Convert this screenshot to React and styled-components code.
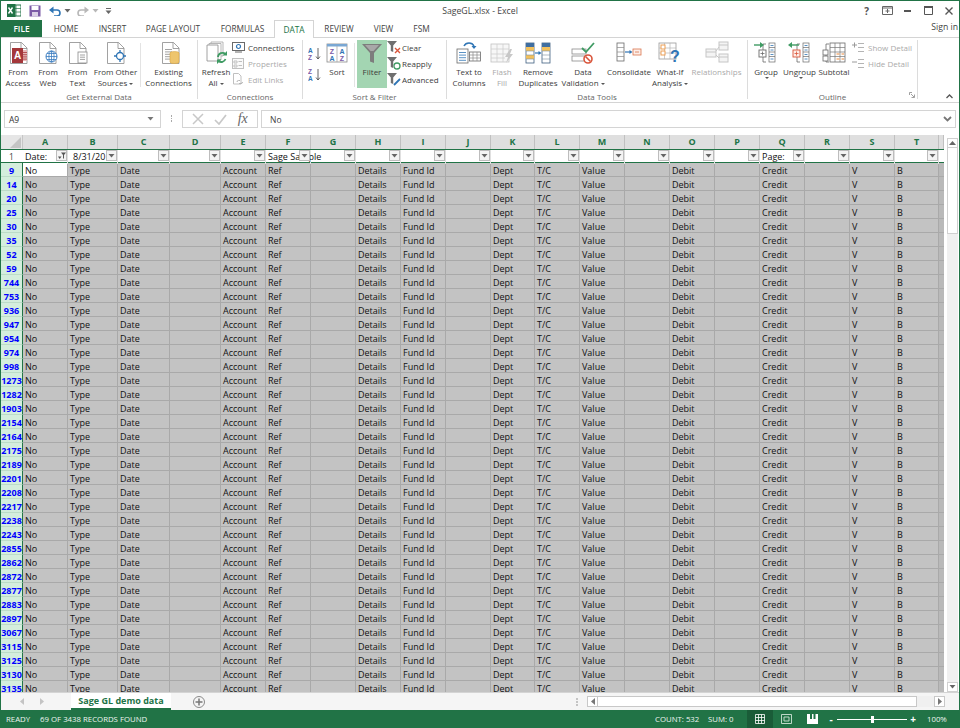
import React from "react";
import styled, { createGlobalStyle } from "styled-components";

const GREEN = "#217346";
const UI_FONT = `"Open Sans", "Noto Sans", "Liberation Sans", sans-serif`;

const GlobalStyle = createGlobalStyle`
  html, body { margin: 0; padding: 0; background: #fff; }
  body { font-family: ${UI_FONT}; color: #444; overflow: hidden; }
`;

const Window = styled.div`
  width: 960px;
  height: 728px;
  box-sizing: border-box;
  border-top: 1px solid ${GREEN};
  border-left: 1px solid ${GREEN};
  border-right: 1px solid ${GREEN};
  display: flex;
  flex-direction: column;
  overflow: hidden;
  background: #fff;
`;

const TitleBar = styled.div`
  height: 19px;
  display: grid;
  grid-template-columns: 1fr auto 1fr;
  align-items: center;
  flex: none;
`;
const QuickAccess = styled.div`
  display: flex;
  align-items: center;
  padding-left: 6px;
`;
const QuickBtn = styled.span`
  width: ${(p) => p.$w}px;
  display: flex;
  align-items: center;
`;
const Title = styled.div`
  font-size: 8.7px;
  color: #444;
`;
const WinControls = styled.div`
  display: flex;
  justify-content: flex-end;
  align-items: center;
`;
const WinBtn = styled.span`
  width: 20.5px;
  height: 16px;
  display: flex;
  align-items: center;
  justify-content: center;
  font-size: 10px;
  font-weight: 700;
  color: #555;
`;

const TabBar = styled.div`
  height: 18px;
  box-sizing: border-box;
  display: flex;
  align-items: stretch;
  flex: none;
  border-bottom: 1px solid #d4d4d4;
`;
const FileTab = styled.div`
  width: 41px;
  background: ${GREEN};
  color: #fff;
  font-size: 8.3px;
  font-weight: 600;
  display: flex;
  align-items: center;
  justify-content: center;
`;
const Tab = styled.div`
  width: ${(p) => p.$w}px;
  box-sizing: border-box;
  font-size: 8.3px;
  display: flex;
  align-items: center;
  justify-content: center;
  color: ${(p) => (p.$active ? GREEN : "#444")};
  position: relative;
  ${(p) =>
    p.$active &&
    `background:#fff; border:1px solid #d4d4d4; border-bottom:none; margin-bottom:-1px; font-weight:500;`}
`;
const SignIn = styled.div`
  margin-left: auto;
  font-size: 8.7px;
  padding-right: 1px;
  margin-top: -3px;
  color: #444;
  align-self: center;
`;

const Ribbon = styled.div`
  height: 65px;
  display: flex;
  flex: none;
  box-sizing: border-box;
  border-bottom: 1px solid #d4d4d4;
  position: relative;
`;
const Group = styled.div`
  width: ${(p) => p.$w}px;
  box-sizing: border-box;
  display: flex;
  flex-direction: column;
  border-right: 1px solid #dcdcdc;
  margin: 2px 0 3px;
  position: relative;
`;
const GroupBody = styled.div`
  height: 50px;
  flex: none;
  display: flex;
  align-items: flex-start;
  padding-left: ${(p) => p.$pl || 0}px;
`;
const GroupLabel = styled.div`
  height: 10px;
  line-height: 13px;
  text-align: center;
  font-size: 8px;
  color: #666;
`;
const BigBtn = styled.div`
  width: ${(p) => p.$w}px;
  flex: none;
  display: flex;
  flex-direction: column;
  align-items: center;
  background: ${(p) => (p.$on ? "#a3d5b2" : "transparent")};
  color: ${(p) => (p.$off ? "#aaa" : "#3c3c3c")};
  font-size: 8px;
  line-height: 11.4px;
  text-align: center;
  white-space: nowrap;
  height: 48px;
  svg { flex: none; margin-top: 1px; height: 24px; margin-bottom: 1px; }
`;
const Caret = styled.span`
  display: inline-block;
  width: 0;
  height: 0;
  margin-left: 2px;
  vertical-align: 1.5px;
  border: 2px solid transparent;
  border-top: 2.5px solid #555;
  border-bottom: none;
`;
const InnerSep = styled.div`
  width: 1px;
  flex: none;
  background: #e3e3e3;
  margin: 3px ${(p) => p.$mr || 1}px 0 ${(p) => p.$ml || 1}px;
  height: 44px;
`;
const SmallList = styled.div`
  display: flex;
  flex-direction: column;
  margin-top: -1px;
`;
const SmallBtn = styled.div`
  height: 16px;
  display: flex;
  align-items: center;
  gap: ${(p) => p.$gap ?? 3}px;
  font-size: 8px;
  white-space: nowrap;
  color: ${(p) => (p.$off ? "#aaa" : "#3c3c3c")};
  svg { flex: none; }
`;
const SortCol = styled.div`
  width: 19px;
  box-sizing: border-box;
  flex: none;
  padding: 7px 0 0 5px;
  display: flex;
  flex-direction: column;
  gap: 8px;
`;
const Launcher = styled.svg`
  position: absolute;
  right: 2px;
  bottom: 1px;
`;
const Collapse = styled.svg`
  position: absolute;
  right: 6px;
  bottom: 3px;
`;

const FormulaBar = styled.div`
  height: 23px;
  margin-top: 2px;
  display: flex;
  align-items: flex-end;
  flex: none;
  padding-left: 3px;
`;
const NameBox = styled.div`
  width: 157px;
  height: 18px;
  box-sizing: border-box;
  border: 1px solid #d4d4d4;
  display: flex;
  align-items: center;
  justify-content: space-between;
  padding: 0 6px 0 4px;
  font-size: 8.5px;
  color: #333;
`;
const Dots = styled.div`
  width: 21px;
  display: flex;
  flex-direction: column;
  align-items: center;
  gap: 1px;
  align-self: center;
  margin-top: 4px;
  i { width: 1.5px; height: 1.5px; background: #aaa; display: block; }
`;
const FxBox = styled.div`
  width: 76px;
  height: 18px;
  box-sizing: border-box;
  border: 1px solid #d4d4d4;
  display: flex;
  align-items: center;
  justify-content: space-around;
  padding: 0 4px;
  margin-right: 3px;
`;
const FxText = styled.span`
  font-family: "Liberation Serif", serif;
  font-style: italic;
  font-size: 14px;
  color: #666;
`;
const FormulaInput = styled.div`
  width: 695px;
  height: 18px;
  box-sizing: border-box;
  border: 1px solid #d4d4d4;
  display: flex;
  align-items: center;
  justify-content: space-between;
  padding: 0 3px 0 8px;
  font-size: 8.5px;
  color: #444;
`;

const SheetArea = styled.div`
  flex: 1;
  min-height: 0;
  margin-top: 7px;
  display: flex;
  overflow: hidden;
`;
const Grid = styled.div`
  flex: none;
  width: 943px;
  overflow: hidden;
  background: #fff;
`;
const COLS = "22px 45px 50px 52px 51px 45px 45px 45px 45px 45px 45px 44px 45px 45px 45px 45px 45px 45px 45px 45px 44px 5px";
const HeadRow = styled.div`
  display: grid;
  grid-template-columns: ${COLS};
  height: 14px;
  background: #e6e6e6;
`;
const Corner = styled.div`
  border-right: 1px solid #c6c6c6;
  display: flex;
  align-items: flex-end;
  justify-content: flex-end;
  padding: 0 1px 1px 0;
`;
const ColHead = styled.div`
  box-sizing: border-box;
  background: #dfdfdf;
  border-right: 1px solid #c0c0c0;
  color: ${GREEN};
  font-size: 9px;
  font-weight: 700;
  text-align: center;
  line-height: 13px;
`;
const FilterRow = styled.div`
  display: grid;
  grid-template-columns: ${COLS};
  height: 14px;
  box-sizing: border-box;
  background: #fff;
  border-top: 1px solid ${GREEN};
  border-bottom: 1px solid ${GREEN};
`;
const FilterHeadNum = styled.div`
  font-size: 8.5px;
  line-height: 14px;
  text-align: center;
  color: #444;
  margin-left: -1px;
`;
const FilterCell = styled.div`
  position: relative;
  box-sizing: border-box;
  border-right: 1px solid #e0e0e0;
  font-size: 9px;
  line-height: 14px;
  color: #111;
  padding-left: ${(p) => p.$pad || 2}px;
  white-space: nowrap;
`;
const FilterBtn = styled.span`
  position: absolute;
  right: 0;
  top: 0;
  width: 11px;
  height: 11px;
  box-sizing: border-box;
  border: 1px solid #bdbdbd;
  background: #f4f4f4;
  display: flex;
  align-items: center;
  justify-content: center;
  z-index: 2;
`;
const DataRow = styled.div`
  display: grid;
  grid-template-columns: ${COLS};
  height: 14px;
`;
const RowHead = styled.div`
  box-sizing: border-box;
  background: #d4eedd;
  border-right: 1px solid ${GREEN};
  border-bottom: 1px solid #bcdcc8;
  color: #0000ff;
  font-size: 9px;
  font-weight: 700;
  padding-top: 2px;
  line-height: 11px;
  text-align: center;
`;
const Cell = styled.div`
  box-sizing: border-box;
  background: ${(p) => (p.$active ? "#fff" : "#c3c3c3")};
  border-right: 1px solid #a9a9a9;
  border-bottom: 1px solid #a9a9a9;
  font-size: 9px;
  padding: 2px 0 0 2px;
  line-height: 11px;
  color: #111;
  white-space: nowrap;
  overflow: hidden;
`;
const Edge = styled.div`
  box-sizing: border-box;
  background: #b9b9b9;
  border-bottom: 1px solid #a9a9a9;
`;

const VScroll = styled.div`
  width: 11px;
  margin-left: 3px;
  padding-top: 3px;
  box-sizing: border-box;
  display: flex;
  flex-direction: column;
`;
const ScrollBtn = styled.div`
  height: 10px;
  flex: none;
  box-sizing: border-box;
  border: 1px solid #d0d0d0;
  display: flex;
  align-items: center;
  justify-content: center;
  background: #fff;
`;
const VThumb = styled.div`
  height: 86px;
  flex: none;
  box-sizing: border-box;
  border: 1px solid #d0d0d0;
  border-top: none;
  background: #fff;
`;
const VTrack = styled.div`
  flex: 1;
  background: #f0f0f0;
`;

const SheetBar = styled.div`
  height: 18px;
  background: #f5f5f5;
  border-top: 1px solid #d4d4d4;
  box-sizing: border-box;
  display: flex;
  align-items: center;
  flex: none;
`;
const NavArrows = styled.div`
  width: 70px;
  display: flex;
  gap: 16px;
  padding-left: 19px;
  box-sizing: border-box;
`;
const SheetTab = styled.div`
  width: 100px;
  height: 17px;
  box-sizing: border-box;
  background: #fff;
  border-bottom: 2px solid ${GREEN};
  color: ${GREEN};
  font-size: 9px;
  font-weight: 700;
  text-align: center;
  line-height: 15px;
  align-self: flex-start;
`;
const AddSheet = styled.div`
  margin-left: 22px;
  width: 12px;
  height: 12px;
  box-sizing: border-box;
  border: 1px solid #8a8a8a;
  border-radius: 50%;
  color: #666;
  display: flex;
  align-items: center;
  justify-content: center;
`;
const SplitDots = styled.div`
  margin-left: 371px;
  display: flex;
  flex-direction: column;
  gap: 1px;
  i { width: 2px; height: 2px; background: #c4c4c4; display: block; }
`;
const HScroll = styled.div`
  margin-left: 9px;
  display: flex;
  align-items: center;
  height: 11px;
  width: 358px;
`;
const HBtn = styled.div`
  width: 11px;
  height: 11px;
  box-sizing: border-box;
  border: 1px solid #c8c8c8;
  background: #fff;
  display: flex;
  align-items: center;
  justify-content: center;
  flex: none;
`;
const HThumb = styled.div`
  width: 319px;
  height: 11px;
  box-sizing: border-box;
  background: #fff;
  border: 1px solid #c8c8c8;
  border-left: none;
  flex: none;
`;
const HTrack = styled.div`
  flex: 1;
  height: 11px;
  background: #f0f0f0;
`;

const StatusBar = styled.div`
  height: 18px;
  background: ${GREEN};
  color: #eef5f0;
  font-size: 7.8px;
  display: flex;
  align-items: center;
  flex: none;
  margin: 0 -1px;
  padding-left: 6px;
`;
const StatusText = styled.span`
  margin-left: ${(p) => p.$ml || 0}px;
  width: ${(p) => (p.$w ? `${p.$w}px` : "auto")};
  flex: none;
  white-space: nowrap;
`;
const StatusRight = styled.div`
  margin-left: auto;
  width: 305px;
  display: flex;
  align-items: center;
`;
const ViewBtn = styled.span`
  width: 26px;
  height: 18px;
  display: flex;
  align-items: center;
  justify-content: center;
  flex: none;
  background: ${(p) => (p.$on ? "#1a5c38" : "transparent")};
`;
const ZoomSlider = styled.div`
  width: 70px;
  height: 1px;
  background: #fff;
  flex: none;
  position: relative;
`;
const ZoomThumb = styled.span`
  position: absolute;
  left: 34px;
  top: -3px;
  width: 3px;
  height: 7px;
  background: #fff;
`;
const ZoomSign = styled.span`
  width: 12px;
  flex: none;
  text-align: center;
  font-size: 10px;
  font-weight: 700;
  color: #fff;
`;

/* icon bits */
const Doc = ({ x = 0, y = 0, w = 17, h = 22 }) => (
  <path
    d={`M${x + 0.5} ${y + 0.5}h${w - 6}l5.5 5.5v${h - 6.5}h-${w - 0.5}z M${x + w - 6} ${y + 0.5}v6h6`}
    fill="#fff"
    stroke="#8a8a8a"
    strokeWidth="0.8"
  />
);

const Lines = ({ x, y, n = 3, w = 6, c = "#8a8a8a", g = 2 }) => (
  <>
    {Array.from({ length: n }).map((_, i) => (
      <path key={i} d={`M${x} ${y + i * g + 0.5}h${w}`} stroke={c} strokeWidth="0.8" />
    ))}
  </>
);

const Icon = ({ w = 24, h = 24, children }) => (
  <svg width={w} height={h} viewBox={`0 0 ${w} ${h}`}>
    {children}
  </svg>
);

const AccessIcon = () => (
  <Icon>
    <Doc x={4} y={1} />
    <rect x="12" y="9" width="9" height="11" fill="#e8b7b7" />
    <Lines x={15} y={11} n={4} w={6} c="#a4373a" g={2.2} />
    <rect x="6" y="7" width="11" height="15" fill="#a4373a" />
    <text x="11.5" y="18" fontSize="10" fontWeight="700" fill="#fff" textAnchor="middle" fontFamily="Liberation Sans">A</text>
  </Icon>
);
const WebIcon = () => (
  <Icon>
    <Doc x={3} y={1} />
    <circle cx="15.5" cy="15.5" r="5.5" fill="#fff" stroke="#3a7cc0" />
    <path d="M10 15.5h11M15.5 10v11M11 12.5h9M11 18.5h9" stroke="#3a7cc0" strokeWidth="0.8" />
    <ellipse cx="15.5" cy="15.5" rx="2.6" ry="5.5" fill="none" stroke="#3a7cc0" strokeWidth="0.8" />
  </Icon>
);
const TextIcon = () => (
  <Icon>
    <Doc x={3} y={1} />
    <rect x="12" y="11" width="9" height="11" fill="#fff" stroke="#8a8a8a" strokeWidth="0.8" />
    <Lines x={14} y={13.5} n={3} w={5} g={2.2} />
  </Icon>
);
const OtherIcon = () => (
  <Icon>
    <Doc x={3} y={1} />
    <circle cx="16" cy="15" r="3.5" fill="#fff" stroke="#2f75b5" strokeWidth="1.3" />
    <path d="M16 9v3M16 18v3M10 15h3M19 15h3" stroke="#2f75b5" strokeWidth="1.3" />
  </Icon>
);
const ExistingIcon = () => (
  <Icon>
    <Doc x={5} y={1} />
    <Lines x={8} y={8} n={5} w={7} g={2.4} />
    <path d="M13 12a4.5 1.5 0 0 1 9 0v9a4.5 1.5 0 0 1-9 0z" fill="#eec56e" stroke="#d9a441" strokeWidth="0.6" />
  </Icon>
);
const RefreshIcon = () => (
  <Icon>
    <path d="M7 1h12v14H7z" fill="#fff" stroke="#a4a4a4" strokeWidth="0.8" />
    <path d="M5 2.5h12v16H5z" fill="#fff" stroke="#a4a4a4" strokeWidth="0.8" />
    <path d="M3 4h11v16H3z" fill="#fff" stroke="#8a8a8a" strokeWidth="0.8" />
    <path d="M14 16a4.5 4.5 0 0 1 7.5-3M21.5 18a4.5 4.5 0 0 1-7 2" fill="none" stroke="#3f9b63" strokeWidth="1.8" />
    <path d="M23 10v4.5h-4.5zM13 23v-4.5h4.5z" fill="#3f9b63" />
  </Icon>
);
const SortAZIcon = ({ flip }) => (
  <svg width="14" height="13" viewBox="0 0 14 13">
    <text x="0" y="6" fontSize="6.5" fontWeight="700" fontFamily="Liberation Sans" fill={flip ? "#7b5aa6" : "#2f75b5"}>{flip ? "Z" : "A"}</text>
    <text x="0" y="12.5" fontSize="6.5" fontWeight="700" fontFamily="Liberation Sans" fill={flip ? "#2f75b5" : "#7b5aa6"}>{flip ? "A" : "Z"}</text>
    <path d="M10 1v11M8 9.5l2 2.5 2-2.5" fill="none" stroke="#555" strokeWidth="0.9" />
  </svg>
);
const SortIcon = () => (
  <Icon>
    <rect x="2" y="3" width="20" height="18" fill="#fff" stroke="#8a8a8a" strokeWidth="0.8" />
    <rect x="2" y="3" width="20" height="2.5" fill="#7aa7d3" />
    <path d="M12 5v16" stroke="#aaa" strokeWidth="0.8" />
    <text x="7" y="13" fontSize="7" fontWeight="600" textAnchor="middle" fontFamily="Liberation Sans" fill="#7b5aa6">Z</text>
    <text x="7" y="20" fontSize="7" fontWeight="600" textAnchor="middle" fontFamily="Liberation Sans" fill="#2f75b5">A</text>
    <text x="17" y="13" fontSize="7" fontWeight="600" textAnchor="middle" fontFamily="Liberation Sans" fill="#2f75b5">A</text>
    <text x="17" y="20" fontSize="7" fontWeight="600" textAnchor="middle" fontFamily="Liberation Sans" fill="#7b5aa6">Z</text>
  </Icon>
);
const FunnelIcon = () => (
  <Icon>
    <path d="M2 3h20l-8 9v10l-4-1.5V12z" fill="#7d7d7d" />
    <path d="M5 4h14l-5.5 6h-3z" fill="#a8a8a8" />
  </Icon>
);
const SmallFunnel = ({ children }) => (
  <svg width="14" height="14" viewBox="0 0 14 14">
    <path d="M0 1h10L6.2 5.5V12L3.8 11V5.5z" fill="#6f6f6f" />
    {children}
  </svg>
);
const TextColsIcon = () => (
  <Icon w={26}>
    <rect x="1" y="8" width="11" height="14" fill="#fff" stroke="#6a6a6a" strokeWidth="0.8" />
    <Lines x={3} y={11} n={4} w={7} c="#2f75b5" g={2.6} />
    <rect x="13.5" y="11" width="11" height="9" fill="#fff" stroke="#6a6a6a" strokeWidth="0.8" />
    <path d="M13.5 14h11M13.5 17h11M17 11v9M21 11v9" stroke="#8a8a8a" strokeWidth="0.7" />
    <path d="M8 5c2-4 8-4 10 0" fill="none" stroke="#2f75b5" strokeWidth="1.5" />
    <path d="M15.5 5h5l-2.5 3z" fill="#2f75b5" />
  </Icon>
);
const FlashIcon = () => (
  <Icon>
    <rect x="1" y="3" width="18" height="18" fill="#f7f7f7" stroke="#c2c2c2" strokeWidth="0.8" />
    <path d="M1 8h18M1 13h18M1 17h14M7 3v18M13 3v18" stroke="#cfcfcf" strokeWidth="0.8" />
    <path d="M20 8l-5 8h3l-2 6 7-9h-3l2-5z" fill="#c8c8c8" />
  </Icon>
);
const Stack = ({ x, hi }) => (
  <>
    <rect x={x} y="2" width="8" height="20" fill="#fff" stroke="#3f5f80" strokeWidth="0.8" />
    <rect x={x} y="2" width="8" height="4" fill="#3f6ea0" />
    {hi.map((y) => (
      <rect key={y} x={x} y={y} width="8" height="4" fill="#f2c05c" />
    ))}
    <path d={`M${x} 10h8M${x} 14h8M${x} 18h8`} stroke="#7a8ea0" strokeWidth="0.6" />
  </>
);
const RemoveIcon = () => (
  <Icon w={26}>
    <Stack x={1} hi={[6, 14]} />
    <Stack x={17} hi={[6]} />
    <path d="M10 12h5" stroke="#2f75b5" strokeWidth="1.2" />
    <path d="M13.5 10l3 2-3 2z" fill="#2f75b5" />
  </Icon>
);
const ValidationIcon = () => (
  <Icon w={26}>
    <rect x="2" y="8" width="14" height="5" fill="#fff" stroke="#8a8a8a" strokeWidth="0.8" />
    <rect x="2" y="15" width="14" height="5" fill="#fff" stroke="#8a8a8a" strokeWidth="0.8" />
    <path d="M12 7l4 4 8-9" fill="none" stroke="#3f9b63" strokeWidth="1.8" />
    <circle cx="18" cy="18" r="4" fill="#fff" stroke="#d9553b" strokeWidth="1.6" />
    <path d="M15.5 15.5l5 5" stroke="#d9553b" strokeWidth="1.6" />
  </Icon>
);
const ConsolidateIcon = () => (
  <Icon w={26}>
    <rect x="1" y="2" width="7" height="18" fill="#fff" stroke="#6a6a6a" strokeWidth="0.8" />
    <path d="M1 6.5h7M1 11h7M1 15.5h7" stroke="#8a8a8a" strokeWidth="0.7" />
    <path d="M9 11h6" stroke="#2f75b5" strokeWidth="1.2" />
    <path d="M13.5 9l3 2-3 2z" fill="#2f75b5" />
    <rect x="17" y="8" width="8" height="6" fill="#fdeee8" stroke="#d9754f" strokeWidth="0.8" />
    <path d="M19 11h4" stroke="#d9754f" strokeWidth="0.8" />
  </Icon>
);
const WhatIfIcon = () => (
  <Icon>
    <rect x="1" y="2" width="17" height="16" fill="#fff" stroke="#9a9a9a" strokeWidth="0.8" />
    <path d="M1 7h17M1 12h17M6.5 2v16M12 2v16" stroke="#b4b4b4" strokeWidth="0.7" />
    <rect x="3" y="4" width="4" height="4" fill="#fff" stroke="#ed9f55" />
    <rect x="3" y="10" width="4" height="4" fill="#fff" stroke="#ed9f55" />
    <text x="17" y="21" fontSize="16" fontWeight="700" textAnchor="middle" fontFamily="Liberation Sans" fill="#2f75b5">?</text>
  </Icon>
);
const RelIcon = () => (
  <Icon>
    <rect x="1" y="8" width="10" height="8" fill="#f4f4f4" stroke="#c6c6c6" />
    <rect x="14" y="1" width="9" height="8" fill="#f4f4f4" stroke="#c6c6c6" />
    <rect x="14" y="13" width="9" height="8" fill="#f4f4f4" stroke="#c6c6c6" />
    <path d="M11 10l3-4M11 14l3 3M1 11h10M14 4h9M14 16h9" stroke="#c6c6c6" />
  </Icon>
);
const OutlineCols = ({ x = 15 }) => (
  <>
    <rect x={x} y="2" width="6" height="19" fill="#fff" stroke="#6a6a6a" strokeWidth="0.7" />
    <path d={`M${x} 6.5h6M${x} 11h6M${x} 15.5h6`} stroke="#6a6a6a" strokeWidth="0.7" />
    <Lines x={x + 1.5} y={4} n={4} w={3} c="#2f75b5" g={4.5} />
  </>
);
const GroupIcon = ({ left, red }) => (
  <Icon>
    <path d="M9 3h3M9 21h3M9 3v18" fill="none" stroke="#6a6a6a" strokeWidth="0.8" />
    <rect x="5" y="9" width="7" height="7" fill={red ? "#fdeee8" : "#fff"} stroke={red ? "#d9553b" : "#6a6a6a"} strokeWidth="0.9" />
    <path d="M6.5 12.5h4M8.5 10.5v4" stroke={red ? "#d9553b" : "#6a6a6a"} strokeWidth="0.8" />
    {left ? (
      <>
        <path d="M3 4h8" stroke="#3f9b63" strokeWidth="1.4" />
        <path d="M4 1l-4 3 4 3z" fill="#3f9b63" />
      </>
    ) : (
      <>
        <path d="M0 4h7" stroke="#3f9b63" strokeWidth="1.4" />
        <path d="M6 1l4 3-4 3z" fill="#3f9b63" />
      </>
    )}
    <OutlineCols />
  </Icon>
);
const SubtotalIcon = () => (
  <Icon>
    <path d="M4 3h3M4 21h3M4 3v18" fill="none" stroke="#6a6a6a" strokeWidth="0.8" />
    <rect x="1" y="9" width="5" height="5" fill="#fff" stroke="#6a6a6a" strokeWidth="0.8" />
    <rect x="1" y="15" width="5" height="5" fill="#fff" stroke="#6a6a6a" strokeWidth="0.8" />
    <rect x="8" y="2" width="15" height="19" fill="#fff" stroke="#6a6a6a" strokeWidth="0.8" />
    <path d="M8 6.5h15M8 11h15M8 15.5h15M13 2v19M18 2v19" stroke="#777" strokeWidth="0.7" />
    <path d="M14.5 13h3M19.5 13h2.5M14.5 18h3M19.5 18h2.5" stroke="#ed8b3c" strokeWidth="1" />
  </Icon>
);
const DetailIcon = ({ plus }) => (
  <svg width="13" height="11" viewBox="0 0 13 11">
    <path d={plus ? "M0 3h5M2.5 .5v5" : "M0 4h5"} stroke="#9a9a9a" />
    <path d="M6 1.5h6M6 5.5h6M6 9.5h6" stroke="#b4b4b4" />
  </svg>
);
const ConnIcon = () => (
  <svg width="13" height="11" viewBox="0 0 13 11">
    <rect x="0.5" y="0.5" width="12" height="8" fill="#fff" stroke="#6a6a6a" />
    <circle cx="6.5" cy="4.5" r="2" fill="none" stroke="#2f75b5" strokeWidth="1.2" />
    <path d="M3 10h7" stroke="#6a6a6a" />
  </svg>
);
const PropsIcon = () => (
  <svg width="13" height="11" viewBox="0 0 13 11">
    <rect x="0.5" y="0.5" width="11" height="10" fill="#fafafa" stroke="#c0c0c0" />
    <path d="M2 3h3v2H2zM2 7h3v2H2zM6.5 3.5h3.5M6.5 7.5h3.5" fill="none" stroke="#c0c0c0" />
  </svg>
);
const LinksIcon = () => (
  <svg width="13" height="12" viewBox="0 0 13 12">
    <path d="M1.5 .5h5l2.5 2.5v8h-7.5z" fill="#fff" stroke="#c0c0c0" />
    <path d="M5 9a1.5 1.5 0 0 1 1.5-1.5H8M7 10.5h2a1.5 1.5 0 0 0 1.5-1.5" fill="none" stroke="#b4b4b4" />
  </svg>
);
const TinyTri = ({ c = "#555" }) => (
  <svg width="7" height="4" viewBox="0 0 7 4">
    <path d="M0.5 0h6L3.5 3.5z" fill={c} />
  </svg>
);
const SideTri = ({ dir = "left", c = "#777" }) => (
  <svg width="4" height="7" viewBox="0 0 4 7">
    <path d={dir === "left" ? "M4 0v7L0 3.5z" : "M0 0v7l4-3.5z"} fill={c} />
  </svg>
);

const colLetters = "ABCDEFGHIJKLMNOPQRST".split("");
const rowNums = [9, 14, 20, 25, 30, 35, 52, 59, 744, 753, 936, 947, 954, 974, 998, 1273, 1282, 1903, 2154, 2164, 2175, 2189, 2201, 2208, 2217, 2238, 2243, 2855, 2862, 2872, 2877, 2883, 2897, 3067, 3115, 3125, 3130, 3135];
const rowData = ["No", "Type", "Date", "", "Account", "Ref", "", "Details", "Fund Id", "", "Dept", "T/C", "Value", "", "Debit", "", "Credit", "", "V", "B"];
const filterData = { A: "Date:", B: "8/31/20", F: "Sage Sample", Q: "Page:" };

export default function App() {
  return (
    <Window>
      <GlobalStyle />
      <TitleBar>
        <QuickAccess>
          <QuickBtn $w={22}>
            <svg width="14" height="13" viewBox="0 0 14 13">
              <rect x="5" y="1" width="9" height="11" fill="#fff" stroke="#217346" />
              <path d="M9 1v11M5 4.5h9M5 8h9" stroke="#217346" strokeWidth="0.7" />
              <rect x="0" y="0" width="8.5" height="13" fill="#217346" />
              <path d="M1.5 3.5l4 6M5.5 3.5l-4 6" stroke="#fff" strokeWidth="1.4" />
            </svg>
          </QuickBtn>
          <QuickBtn $w={20}>
            <svg width="12" height="12" viewBox="0 0 12 12">
              <rect x="0.5" y="0.5" width="11" height="11" fill="#7b5aa6" />
              <rect x="2.5" y="1" width="7" height="4" fill="#fff" />
              <rect x="3" y="7" width="6" height="4.5" fill="#d9cfe6" />
            </svg>
          </QuickBtn>
          <QuickBtn $w={15}>
            <svg width="12" height="10" viewBox="0 0 12 10">
              <path d="M2 4h6a3 3 0 0 1 0 6H5" fill="none" stroke="#2f75b5" strokeWidth="1.6" />
              <path d="M4.5 .5v7L0 4z" fill="#2f75b5" />
            </svg>
          </QuickBtn>
          <QuickBtn $w={13}>
            <TinyTri c="#666" />
          </QuickBtn>
          <QuickBtn $w={15}>
            <svg width="12" height="10" viewBox="0 0 12 10">
              <path d="M10 4H4a3 3 0 0 0 0 6h3" fill="none" stroke="#b8b8b8" strokeWidth="1.6" />
              <path d="M7.5 .5v7L12 4z" fill="#b8b8b8" />
            </svg>
          </QuickBtn>
          <QuickBtn $w={13}>
            <TinyTri c="#b8b8b8" />
          </QuickBtn>
          <QuickBtn $w={10}>
            <svg width="7" height="6" viewBox="0 0 7 6">
              <path d="M1 .5h5" stroke="#666" />
              <path d="M0.5 2.5h6L3.5 6z" fill="#666" />
            </svg>
          </QuickBtn>
        </QuickAccess>
        <Title>SageGL.xlsx - Excel</Title>
        <WinControls>
          <WinBtn>?</WinBtn>
          <WinBtn>
            <svg width="11" height="9" viewBox="0 0 11 9">
              <path d="M.5.5h10v8H.5z" fill="none" stroke="#666" />
              <path d="M.5 2h10" stroke="#666" />
              <path d="M5.5 3v4M3.5 5h4" stroke="#666" />
            </svg>
          </WinBtn>
          <WinBtn>
            <svg width="7" height="2" viewBox="0 0 7 2">
              <path d="M0 1h7" stroke="#555" strokeWidth="2" />
            </svg>
          </WinBtn>
          <WinBtn>
            <svg width="9" height="9" viewBox="0 0 9 9">
              <path d="M.5 1h8v7.5h-8z" fill="none" stroke="#555" />
              <path d="M0 1h9" stroke="#555" strokeWidth="2" />
            </svg>
          </WinBtn>
          <WinBtn>
            <svg width="8" height="8" viewBox="0 0 8 8">
              <path d="M.5.5l7 7M7.5.5l-7 7" stroke="#555" strokeWidth="1.4" />
            </svg>
          </WinBtn>
        </WinControls>
      </TitleBar>

      <TabBar>
        <FileTab>FILE</FileTab>
        <Tab $w={48}>HOME</Tab>
        <Tab $w={45}>INSERT</Tab>
        <Tab $w={76}>PAGE LAYOUT</Tab>
        <Tab $w={63}>FORMULAS</Tab>
        <Tab $w={40} $active>DATA</Tab>
        <Tab $w={50}>REVIEW</Tab>
        <Tab $w={39}>VIEW</Tab>
        <Tab $w={37}>FSM</Tab>
        <SignIn>Sign in</SignIn>
      </TabBar>

      <Ribbon>
        <Group $w={197}>
          <GroupBody $pl={2}>
            <BigBtn $w={30}><AccessIcon />From<br />Access</BigBtn>
            <BigBtn $w={30}><WebIcon />From<br />Web</BigBtn>
            <BigBtn $w={29}><TextIcon />From<br />Text</BigBtn>
            <BigBtn $w={47}><OtherIcon />From Other<br /><span>Sources<Caret /></span></BigBtn>
            <InnerSep />
            <BigBtn $w={53}><ExistingIcon />Existing<br />Connections</BigBtn>
          </GroupBody>
          <GroupLabel>Get External Data</GroupLabel>
        </Group>
        <Group $w={105}>
          <GroupBody $pl={2}>
            <BigBtn $w={32}><RefreshIcon />Refresh<br /><span>All<Caret /></span></BigBtn>
            <SmallList>
              <SmallBtn><ConnIcon />Connections</SmallBtn>
              <SmallBtn $off><PropsIcon />Properties</SmallBtn>
              <SmallBtn $off><LinksIcon />Edit Links</SmallBtn>
            </SmallList>
          </GroupBody>
          <GroupLabel>Connections</GroupLabel>
        </Group>
        <Group $w={144}>
          <GroupBody>
            <SortCol>
              <SortAZIcon />
              <SortAZIcon flip />
            </SortCol>
            <BigBtn $w={30}><SortIcon />Sort</BigBtn>
            <InnerSep $ml={2} $mr={2} />
            <BigBtn $w={30} $on><FunnelIcon />Filter</BigBtn>
            <SmallList>
              <SmallBtn $gap={1}>
                <SmallFunnel><path d="M8 8l5 5M13 8l-5 5" stroke="#d9553b" strokeWidth="1.4" /></SmallFunnel>Clear
              </SmallBtn>
              <SmallBtn $gap={1}>
                <SmallFunnel><circle cx="10" cy="10" r="3" fill="none" stroke="#3f9b63" strokeWidth="1.3" /></SmallFunnel>Reapply
              </SmallBtn>
              <SmallBtn $gap={1}>
                <SmallFunnel><path d="M7 13l6-6" stroke="#2f75b5" strokeWidth="1.8" /></SmallFunnel>Advanced
              </SmallBtn>
            </SmallList>
          </GroupBody>
          <GroupLabel>Sort &amp; Filter</GroupLabel>
        </Group>
        <Group $w={301}>
          <GroupBody $pl={1}>
            <BigBtn $w={42}><TextColsIcon />Text to<br />Columns</BigBtn>
            <BigBtn $w={24} $off><FlashIcon />Flash<br />Fill</BigBtn>
            <BigBtn $w={48}><RemoveIcon />Remove<br />Duplicates</BigBtn>
            <BigBtn $w={42}><ValidationIcon />Data<br /><span>Validation<Caret /></span></BigBtn>
            <BigBtn $w={50}><ConsolidateIcon />Consolidate</BigBtn>
            <BigBtn $w={32}><WhatIfIcon />What-If<br /><span>Analysis<Caret /></span></BigBtn>
            <BigBtn $w={61} $off><RelIcon />Relationships</BigBtn>
          </GroupBody>
          <GroupLabel>Data Tools</GroupLabel>
        </Group>
        <Group $w={170}>
          <GroupBody $pl={1}>
            <BigBtn $w={34}><GroupIcon />Group<br /><Caret /></BigBtn>
            <BigBtn $w={33}><GroupIcon left red />Ungroup<br /><Caret /></BigBtn>
            <BigBtn $w={36}><SubtotalIcon />Subtotal</BigBtn>
            <SmallList>
              <SmallBtn $off><DetailIcon plus />Show Detail</SmallBtn>
              <SmallBtn $off><DetailIcon />Hide Detail</SmallBtn>
            </SmallList>
          </GroupBody>
          <GroupLabel>Outline</GroupLabel>
          <Launcher width="6" height="6" viewBox="0 0 6 6">
            <path d="M.5 3V.5H3M2 2l3 3M5.5 2.5v3H2.5" fill="none" stroke="#888" strokeWidth="0.8" />
          </Launcher>
        </Group>
        <Collapse width="7" height="5" viewBox="0 0 7 5">
          <path d="M.5 4l3-3 3 3" fill="none" stroke="#555" strokeWidth="1.3" />
        </Collapse>
      </Ribbon>

      <FormulaBar>
        <NameBox>
          A9
          <TinyTri c="#777" />
        </NameBox>
        <Dots><i /><i /><i /></Dots>
        <FxBox>
          <svg width="12" height="12" viewBox="0 0 12 12">
            <path d="M1 1l10 10M11 1L1 11" stroke="#c8c8c8" strokeWidth="1.5" />
          </svg>
          <svg width="13" height="11" viewBox="0 0 13 11">
            <path d="M1 6l4 4 7-9" fill="none" stroke="#c8c8c8" strokeWidth="1.7" />
          </svg>
          <FxText>fx</FxText>
        </FxBox>
        <FormulaInput>
          No
          <svg width="9" height="6" viewBox="0 0 9 6">
            <path d="M1 1l3.5 3.5L8 1" fill="none" stroke="#777" strokeWidth="1.8" />
          </svg>
        </FormulaInput>
      </FormulaBar>

      <SheetArea>
        <Grid>
          <HeadRow>
            <Corner>
              <svg width="11" height="11" viewBox="0 0 11 11">
                <path d="M11 0v11H0z" fill="#c4c4c4" />
              </svg>
            </Corner>
            {colLetters.map((c) => (
              <ColHead key={c}>{c}</ColHead>
            ))}
            <ColHead />
          </HeadRow>
          <FilterRow>
            <FilterHeadNum>1</FilterHeadNum>
            {colLetters.map((c) => (
              <FilterCell key={c} $pad={c === "B" ? 5 : 2}>
                {filterData[c]}
                <FilterBtn>
                  {c === "A" ? (
                    <svg width="8" height="7" viewBox="0 0 8 7">
                      <path d="M0 4.5h3.5L1.7 7z" fill="#555" />
                      <path d="M3 .5h5L6 3v4L5 6V3z" fill="#555" />
                    </svg>
                  ) : (
                    <TinyTri c="#666" />
                  )}
                </FilterBtn>
              </FilterCell>
            ))}
          </FilterRow>
          {rowNums.map((n, i) => (
            <DataRow key={n}>
              <RowHead>{n}</RowHead>
              {rowData.map((v, j) => (
                <Cell key={j} $active={i === 0 && j === 0}>{v}</Cell>
              ))}
              <Edge />
            </DataRow>
          ))}
        </Grid>
        <VScroll>
          <ScrollBtn>
            <svg width="7" height="4" viewBox="0 0 7 4"><path d="M3.5 0l3.5 4H0z" fill="#666" /></svg>
          </ScrollBtn>
          <VThumb />
          <VTrack />
          <ScrollBtn><TinyTri c="#666" /></ScrollBtn>
        </VScroll>
      </SheetArea>

      <SheetBar>
        <NavArrows>
          <SideTri c="#c4c4c4" />
          <SideTri dir="right" c="#c4c4c4" />
        </NavArrows>
        <SheetTab>Sage GL demo data</SheetTab>
        <AddSheet>
          <svg width="8" height="8" viewBox="0 0 8 8"><path d="M4 .5v7M.5 4h7" stroke="#777" strokeWidth="1.5" /></svg>
        </AddSheet>
        <SplitDots><i /><i /><i /></SplitDots>
        <HScroll>
          <HBtn><SideTri c="#777" /></HBtn>
          <HThumb />
          <HTrack />
          <HBtn><SideTri dir="right" c="#777" /></HBtn>
        </HScroll>
      </SheetBar>

      <StatusBar>
        <StatusText>READY</StatusText>
        <StatusText $ml={10}>69 OF 3438 RECORDS FOUND</StatusText>
        <StatusRight>
          <StatusText $w={53}>COUNT: 532</StatusText>
          <StatusText $w={39}>SUM: 0</StatusText>
          <ViewBtn $on>
            <svg width="10" height="10" viewBox="0 0 10 10"><path d="M.5.5h9v9h-9zM.5 3.5h9M.5 6.5h9M3.5.5v9M6.5.5v9" fill="none" stroke="#fff" strokeWidth="0.8" /></svg>
          </ViewBtn>
          <ViewBtn>
            <svg width="11" height="10" viewBox="0 0 11 10"><path d="M.5.5h10v9H.5zM3 3h5v4H3z" fill="none" stroke="#cfe3d6" strokeWidth="0.9" /></svg>
          </ViewBtn>
          <ViewBtn>
            <svg width="11" height="10" viewBox="0 0 11 10"><path d="M0 0h11v10H0z" fill="#fff" /><path d="M3 0v5h2V0M6.5 0v5h2V0" fill="#217346" /></svg>
          </ViewBtn>
          <ZoomSign>-</ZoomSign>
          <ZoomSlider><ZoomThumb /></ZoomSlider>
          <ZoomSign>+</ZoomSign>
          <StatusText $ml={8}>100%</StatusText>
        </StatusRight>
      </StatusBar>
    </Window>
  );
}
